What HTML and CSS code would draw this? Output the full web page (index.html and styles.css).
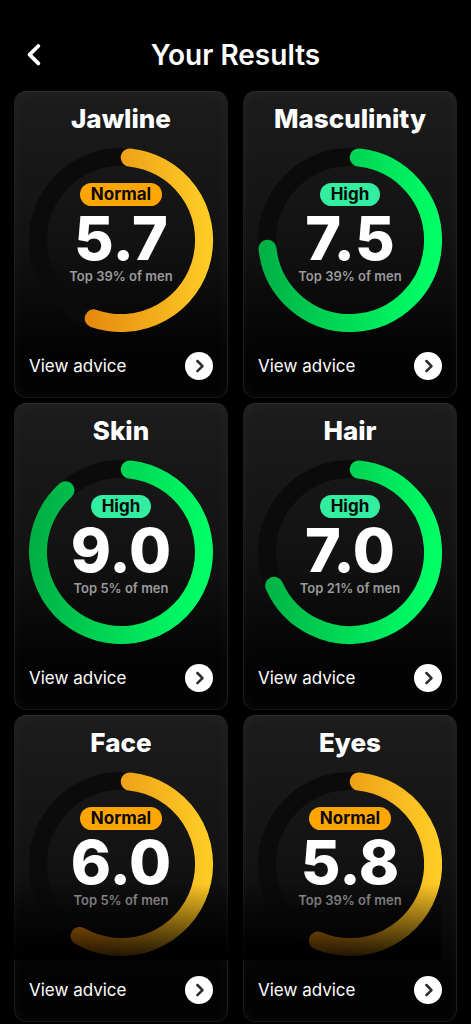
FILE: index.html
```html
<!DOCTYPE html>
<html lang="en">
<head>
<meta charset="utf-8">
<meta name="viewport" content="width=device-width, initial-scale=1">
<title>Your Results</title>
<link rel="stylesheet" href="styles.css">
</head>
<body>
<svg class="defs" aria-hidden="true">
  <defs>
    <linearGradient id="amber" gradientUnits="userSpaceOnUse" x1="20" y1="102" x2="182" y2="90">
      <stop offset="0" stop-color="#df780a"/>
      <stop offset="1" stop-color="#ffcd26"/>
    </linearGradient>
    <linearGradient id="green" gradientUnits="userSpaceOnUse" x1="6" y1="84" x2="176" y2="104">
      <stop offset="0" stop-color="#00b044"/>
      <stop offset="1" stop-color="#00ff66"/>
    </linearGradient>
    <symbol id="go" viewBox="0 0 28 28">
      <circle cx="14" cy="14" r="14" fill="#fff"/>
      <path d="M12.4 9l5.1 5.1-5.1 5.1" fill="none" stroke="#2b2b30" stroke-width="2.5" stroke-linecap="round" stroke-linejoin="round"/>
    </symbol>
  </defs>
</svg>

<header class="header">
  <button class="back" type="button" aria-label="Back">
    <svg class="back-icon" viewBox="0 0 14 22"><path d="M11.3 2L2.6 10.7l8.7 8.7" fill="none" stroke="#fff" stroke-width="3.8" stroke-linecap="round" stroke-linejoin="round"/></svg>
  </button>
  <h1 class="title">Your Results</h1>
</header>

<main class="grid">
  <article class="card">
    <h2 class="name">Jawline</h2>
    <div class="gauge">
      <svg class="ring" viewBox="0 0 184 184"><circle class="track" cx="92" cy="92" r="83"/><path class="arc amber" d="M100.7 9.5A83 83 0 1 1 64.7 170.4"/></svg>
      <div class="reading"><span class="badge normal">Normal</span><strong class="score">5.7</strong><span class="rank">Top 39% of men</span></div>
    </div>
    <a class="advice" href="#">View advice <svg class="go"><use href="#go"/></svg></a>
  </article>

  <article class="card">
    <h2 class="name">Masculinity</h2>
    <div class="gauge">
      <svg class="ring" viewBox="0 0 184 184"><circle class="track" cx="92" cy="92" r="83"/><path class="arc green" d="M100.7 9.5A83 83 0 1 1 9.5 100.7"/></svg>
      <div class="reading"><span class="badge high">High</span><strong class="score">7.5</strong><span class="rank">Top 39% of men</span></div>
    </div>
    <a class="advice" href="#">View advice <svg class="go"><use href="#go"/></svg></a>
  </article>

  <article class="card">
    <h2 class="name">Skin</h2>
    <div class="gauge">
      <svg class="ring" viewBox="0 0 184 184"><circle class="track" cx="92" cy="92" r="83"/><path class="arc green" d="M100.7 9.5A83 83 0 1 1 36.5 30.3"/></svg>
      <div class="reading"><span class="badge high">High</span><strong class="score">9.0</strong><span class="rank">Top 5% of men</span></div>
    </div>
    <a class="advice" href="#">View advice <svg class="go"><use href="#go"/></svg></a>
  </article>

  <article class="card">
    <h2 class="name">Hair</h2>
    <div class="gauge">
      <svg class="ring" viewBox="0 0 184 184"><circle class="track" cx="92" cy="92" r="83"/><path class="arc green" d="M100.7 9.5A83 83 0 1 1 16.2 125.8"/></svg>
      <div class="reading"><span class="badge high">High</span><strong class="score">7.0</strong><span class="rank">Top 21% of men</span></div>
    </div>
    <a class="advice" href="#">View advice <svg class="go"><use href="#go"/></svg></a>
  </article>

  <article class="card">
    <h2 class="name">Face</h2>
    <div class="gauge">
      <svg class="ring" viewBox="0 0 184 184"><circle class="track" cx="92" cy="92" r="83"/><path class="arc amber" d="M100.7 9.5A83 83 0 1 1 50.5 163.9"/></svg>
      <div class="reading"><span class="badge normal">Normal</span><strong class="score">6.0</strong><span class="rank">Top 5% of men</span></div>
    </div>
    <a class="advice" href="#">View advice <svg class="go"><use href="#go"/></svg></a>
  </article>

  <article class="card">
    <h2 class="name">Eyes</h2>
    <div class="gauge">
      <svg class="ring" viewBox="0 0 184 184"><circle class="track" cx="92" cy="92" r="83"/><path class="arc amber" d="M100.7 9.5A83 83 0 1 1 59.8 168.5"/></svg>
      <div class="reading"><span class="badge normal">Normal</span><strong class="score">5.8</strong><span class="rank">Top 39% of men</span></div>
    </div>
    <a class="advice" href="#">View advice <svg class="go"><use href="#go"/></svg></a>
  </article>
</main>
<div class="fade"></div>
</body>
</html>
```

FILE: styles.css
```css
* {
  box-sizing: border-box;
}

body {
  margin: 0;
  background: #000;
  color: #fff;
  font-family: Inter, "Liberation Sans", sans-serif;
}

.defs {
  display: block;
  width: 0;
  height: 0;
}

.header {
  display: grid;
  grid-template-columns: 40px 1fr 40px;
  align-items: center;
  padding: 35px 14px 16px;
}

.back {
  display: grid;
  place-items: center;
  height: 40px;
  padding: 0;
  border: 0;
  background: none;
}

.back-icon {
  width: 14px;
  height: 22px;
}

.title {
  margin: 0;
  font-size: 28px;
  font-weight: 600;
  line-height: 40px;
  text-align: center;
}

.grid {
  display: grid;
  grid-template-columns: 1fr 1fr;
  gap: 5px 15px;
  padding: 0 14px 1px;
}

.card {
  padding: 11px 14px 17px;
  border: 1px solid;
  border-color: #2c2c2c #1e1e1e #161616;
  border-radius: 12px;
  background: linear-gradient(#1c1c1c, #121212 50%, #030303 85%, #020202);
  box-shadow: inset 0 0 16px rgba(255, 255, 255, 0.04);
}

.name {
  margin: 0 0 13px;
  font-size: 26px;
  font-weight: 800;
  line-height: 32px;
  text-align: center;
}

.gauge {
  display: grid;
  margin-bottom: 20px;
}

.ring,
.reading {
  grid-area: 1 / 1;
}

.ring {
  display: block;
  width: 100%;
  overflow: visible;
}

.track {
  fill: none;
  stroke: #0b0b0b;
  stroke-width: 18;
}

.arc {
  fill: none;
  stroke-width: 18;
  stroke-linecap: round;
}

.amber {
  stroke: url(#amber);
}

.green {
  stroke: url(#green);
}

.reading {
  display: flex;
  flex-direction: column;
  align-items: center;
  padding-top: 35px;
}

.badge {
  padding: 0 11px;
  border-radius: 12px;
  color: #0a0a0a;
  font-size: 17px;
  font-weight: 700;
  line-height: 23px;
}

.normal {
  background: #ffa602;
}

.high {
  background: #33eda0;
}

.score {
  font-size: 61px;
  font-weight: 800;
  line-height: 64px;
}

.rank {
  color: #9b9b9b;
  font-size: 13px;
  font-weight: 600;
  line-height: 12px;
}

.advice {
  display: flex;
  align-items: center;
  justify-content: space-between;
  color: #fff;
  font-size: 17px;
  text-decoration: none;
}

.go {
  width: 28px;
  height: 28px;
}

.fade {
  position: fixed;
  right: 30px;
  bottom: 64px;
  left: 0;
  height: 76px;
  background: linear-gradient(transparent, rgba(0, 0, 0, 0.9));
  pointer-events: none;
}
```
